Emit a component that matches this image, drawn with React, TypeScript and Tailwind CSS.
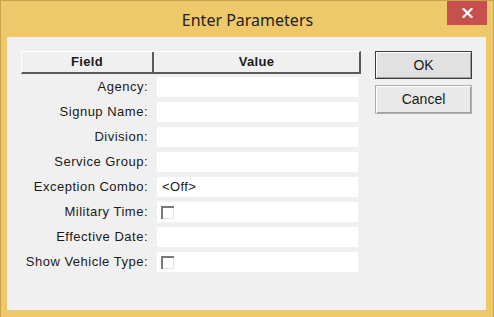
import React from 'react'

const rows: { label: string; kind: 'text' | 'check'; value?: string }[] = [
  { label: 'Agency:', kind: 'text' },
  { label: 'Signup Name:', kind: 'text' },
  { label: 'Division:', kind: 'text' },
  { label: 'Service Group:', kind: 'text' },
  { label: 'Exception Combo:', kind: 'text', value: '<Off>' },
  { label: 'Military Time:', kind: 'check' },
  { label: 'Effective Date:', kind: 'text' },
  { label: 'Show Vehicle Type:', kind: 'check' },
]

const CheckBox = () => (
  <span className="ml-[4px] block h-[13px] w-[13px] border-t-2 border-l-2 border-t-[#7a7a7a] border-l-[#7a7a7a] bg-white shadow-[inset_-1px_-1px_0_#e3e3e3]" />
)

const App = () => {
  return (
    <div
      className="flex h-[317px] w-[494px] flex-col border-x border-t border-[#c9a24e] bg-[#efc86a] text-[13px] text-[#1a1a1a]"
      style={{ fontFamily: '"Liberation Sans", Arial, sans-serif' }}
    >
      {/* title bar */}
      <div className="flex h-[36px] items-start">
        <div className="w-[47px]" />
        <div
          className="flex h-[38px] flex-1 items-center justify-center text-[16px] text-[#222]"
          style={{ fontFamily: '"Noto Sans", "Open Sans", sans-serif' }}
        >
          Enter Parameters
        </div>
        <div className="mr-[6px] flex h-[24px] w-[40px] items-center justify-center bg-[#c7504f]">
          <svg width="11" height="10" viewBox="0 0 11 10">
            <path d="M1.5 1 L9.5 9 M9.5 1 L1.5 9" stroke="white" strokeWidth="2.2" strokeLinecap="square" />
          </svg>
        </div>
      </div>

      {/* client area */}
      <div className="ml-[6px] flex h-[273px] w-[479px] bg-[#f0f0f0] pl-[14px] pt-[14px]">
        <div className="w-[340px]">
          <div className="flex h-[23px] border-t border-l border-white border-b-2 border-b-[#5a5a5a] border-r-2 border-r-[#5a5a5a] font-bold tracking-[0.3px]">
            <div className="flex w-[132px] items-center justify-center border-r-2 border-[#5a5a5a]">Field</div>
            <div className="flex flex-1 items-center justify-center">Value</div>
          </div>
          <div className="mt-[3px] flex flex-col gap-[5px]">
            {rows.map((r) => (
              <div key={r.label} className="flex h-[20px] items-center">
                <div className="w-[127px] whitespace-nowrap text-right tracking-[0.5px]">{r.label}</div>
                <div className="ml-[9px] flex h-[20px] w-[201px] items-center bg-white">
                  {r.kind === 'check' ? <CheckBox /> : <span className="pl-[5px] tracking-[0.4px]">{r.value}</span>}
                </div>
              </div>
            ))}
          </div>
        </div>

        <div className="ml-[14px] flex w-[97px] flex-col gap-[6px] text-[14px]">
          <button className="flex h-[28px] items-center justify-center border border-[#3c3c3c] bg-[#e1e1e1] shadow-[inset_1px_1px_0_#fff,inset_-1px_-1px_0_#a0a0a0]">
            OK
          </button>
          <button className="flex h-[29px] items-center justify-center border border-[#adadad] bg-[#e9e9e9] shadow-[inset_1px_1px_0_#fff,inset_-1px_-1px_0_#a0a0a0]">
            Cancel
          </button>
        </div>
      </div>
    </div>
  )
}

export default App
